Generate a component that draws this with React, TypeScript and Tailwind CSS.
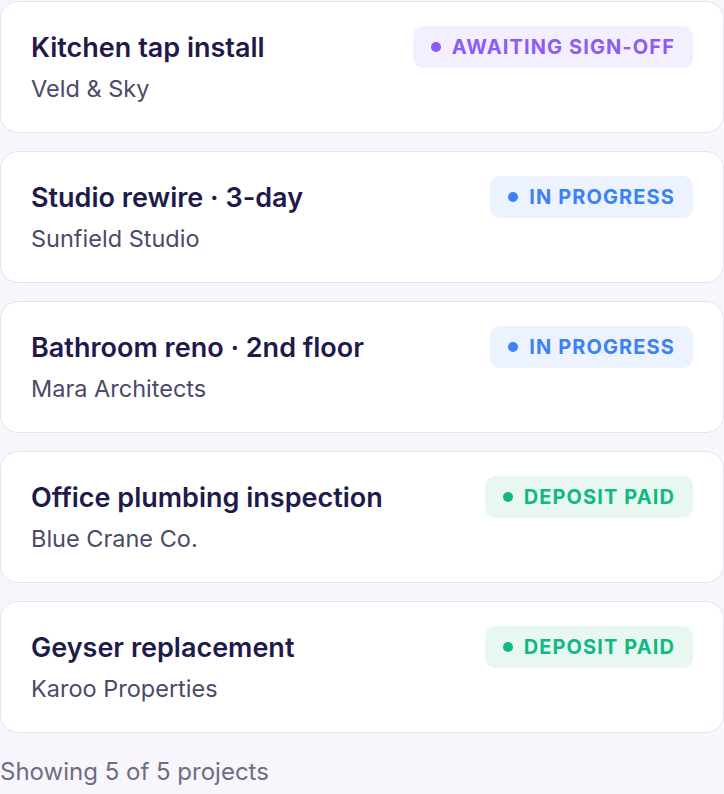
const projects = [
  { title: "Kitchen tap install", client: "Veld & Sky", status: "Awaiting sign-off", tone: "violet" },
  { title: "Studio rewire · 3-day", client: "Sunfield Studio", status: "In progress", tone: "blue" },
  { title: "Bathroom reno · 2nd floor", client: "Mara Architects", status: "In progress", tone: "blue" },
  { title: "Office plumbing inspection", client: "Blue Crane Co.", status: "Deposit paid", tone: "green" },
  { title: "Geyser replacement", client: "Karoo Properties", status: "Deposit paid", tone: "green" },
];

const badgeTones: Record<string, { box: string; dot: string }> = {
  violet: { box: "bg-[#f3effe] text-[#8b5cf6]", dot: "bg-[#8b5cf6]" },
  blue: { box: "bg-[#ecf2fe] text-[#3b82f6]", dot: "bg-[#3b82f6]" },
  green: { box: "bg-[#e8f8f1] text-[#10b981]", dot: "bg-[#10b981]" },
};

export default function App() {
  return (
    <div className="min-h-screen bg-[#f8f5fd] font-['Inter',sans-serif]">
      {/* Project list */}
      <div className="flex flex-col gap-[18px] pt-px">
        {projects.map((p) => {
          const tone = badgeTones[p.tone];
          return (
            <div
              key={p.title}
              className="flex h-[132px] items-start justify-between rounded-[18px] border-[1.5px] border-[#e6e3ee] bg-white px-[30px] pt-[24px]"
            >
              <div className="flex flex-col">
                <h2 className="text-[27px] leading-[44px] font-semibold text-[#1e1b4b]">
                  {p.title}
                </h2>
                <p className="mt-[3px] text-[23.5px] leading-[32px] text-[#4b4a68]">{p.client}</p>
              </div>
              <span
                className={`flex h-[42px] items-center gap-[11px] rounded-[10px] px-[18px] text-[20px] font-bold uppercase tracking-[1.1px] ${tone.box}`}
              >
                <span className={`h-[10px] w-[10px] rounded-full ${tone.dot}`} />
                {p.status}
              </span>
            </div>
          );
        })}
      </div>

      {/* Footer */}
      <p className="mt-[23px] text-[24px] leading-[32px] text-[#6b6f80]">Showing 5 of 5 projects</p>
    </div>
  );
}
